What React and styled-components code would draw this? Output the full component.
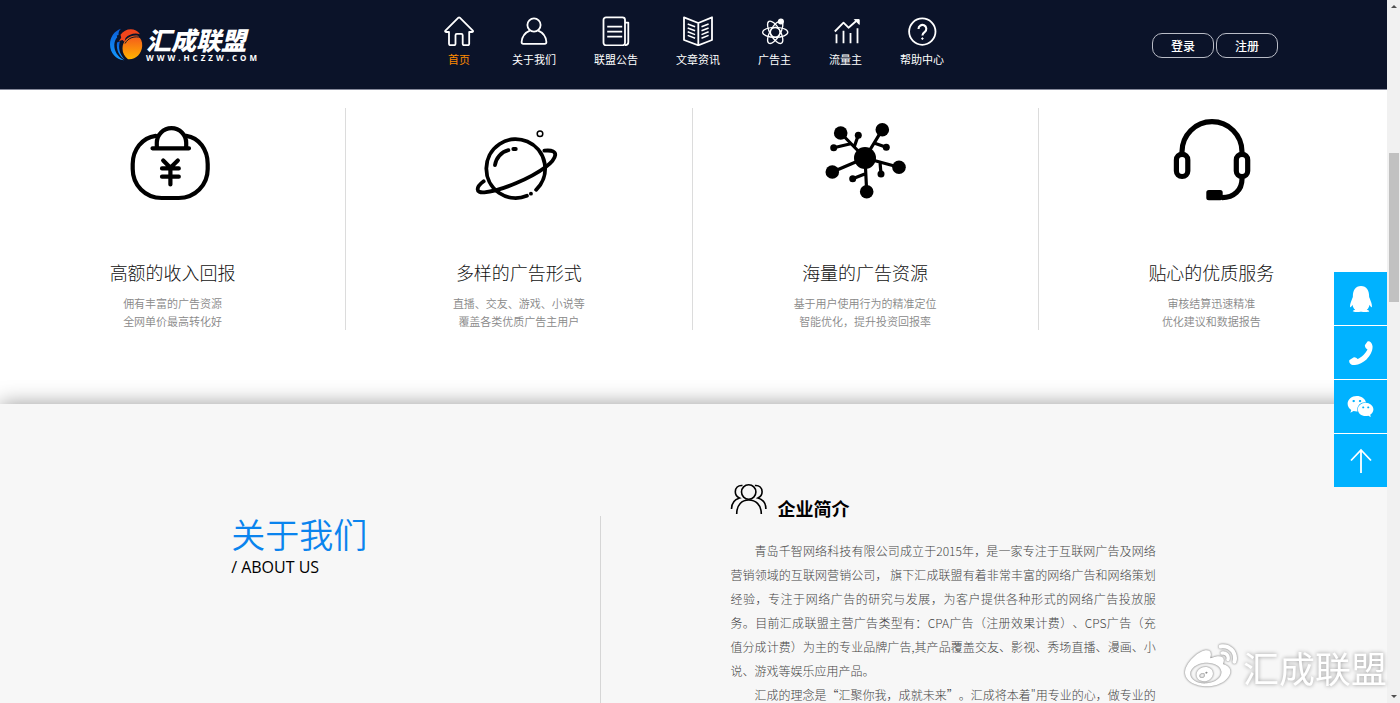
import React from "react"
import styled, { createGlobalStyle } from "styled-components"
import { FaQq, FaWeibo, FaWeixin } from "react-icons/fa"

const navItems = [
  { label: "首页", icon: "home", active: true },
  { label: "关于我们", icon: "user" },
  { label: "联盟公告", icon: "notice" },
  { label: "文章资讯", icon: "book" },
  { label: "广告主", icon: "atom" },
  { label: "流量主", icon: "chart" },
  { label: "帮助中心", icon: "help" },
]

const features = [
  { title: "高额的收入回报", icon: "bag", lines: ["佣有丰富的广告资源", "全网单价最高转化好"] },
  { title: "多样的广告形式", icon: "planet", lines: ["直播、交友、游戏、小说等", "覆盖各类优质广告主用户"] },
  { title: "海量的广告资源", icon: "network", lines: ["基于用户使用行为的精准定位", "智能优化，提升投资回报率"] },
  { title: "贴心的优质服务", icon: "headset", lines: ["审核结算迅速精准", "优化建议和数据报告"] },
]

const navIcons = {
  home: (
    <path d="M14.4 1.7 1.4 14.6q-.8 1.2.7 1.4H5v11.7q0 1.5 1.5 1.5h3.6q1.4 0 1.4-1.4v-8.6q0-1.3 1.3-1.3h4.6q1.3 0 1.3 1.3v8.6q0 1.4 1.4 1.4h3.6q1.5 0 1.5-1.5V16h2.9q1.5-.2.7-1.4L15.8 1.7q-.7-.6-1.4 0Z" />
  ),
  user: (
    <>
      <circle cx="15" cy="9" r="6.6" />
      <path d="M10.8 14.6C6 16.6 3 21 2.6 26q0 1.8 1.7 1.8h21.4q1.7 0 1.7-1.8c-.4-5-3.4-9.4-8.2-11.4" />
    </>
  ),
  notice: (
    <>
      <rect x="2.5" y="1.3" width="21.5" height="28" rx="2.5" />
      <path d="M6.2 10.7h15M6.2 15.7h15M6.2 20.7h15M24 6.6h3.3v19.6q0 3-3.4 3" />
    </>
  ),
  book: (
    <>
      <path d="M1 1.3 15.3 7 29 1.3V24l-13.7 5.3L1 24ZM15.3 7v22" />
      <path d="m4.7 8 7.4 2.8M4.7 12l7.4 2.8M4.7 15.8l7.4 2.8M4.7 19.4l7.4 2.8M25.6 8l-7.1 2.8M25.6 12l-7.1 2.8M25.6 15.8l-7.1 2.8M25.6 19.4l-7.1 2.8" strokeWidth="1.5" />
    </>
  ),
  atom: (
    <g strokeWidth="1.3">
      <circle cx="15.2" cy="16.3" r="4.8" />
      <ellipse cx="15.2" cy="16.3" rx="12.6" ry="5" />
      <ellipse cx="15.2" cy="16.3" rx="12.6" ry="5" transform="rotate(60 15.2 16.3)" />
      <ellipse cx="15.2" cy="16.3" rx="12.6" ry="5" transform="rotate(120 15.2 16.3)" />
      <circle cx="20.9" cy="5.5" r="2.4" fill="currentColor" />
    </g>
  ),
  chart: (
    <>
      <path d="M5.5 18.3v9M12.5 14.7v12.6M19.5 17v10.3M26.5 12.3v15" />
      <path d="m3.8 15.5 8.7-8.8 5 5 8-7" />
      <path d="M23.4 3.6h4.8v4.8Z" fill="currentColor" strokeWidth="1" />
    </>
  ),
  help: (
    <>
      <circle cx="15.3" cy="15.6" r="13.2" />
      <path d="M11.5 12.9a3.9 3.9 0 1 1 6.3 3c-1.6 1.2-2.4 1.8-2.4 3.6" strokeWidth="2.1" />
      <circle cx="15.4" cy="22.6" r=".8" fill="currentColor" strokeWidth="1" />
    </>
  ),
}

const featureIcons = {
  bag: (
    <g strokeWidth="4.2">
      <path d="M32.7 27.8C19 29.5 9.7 42 9.7 56v5C9.7 77 22 90 38.7 90h17C72 90 84.7 77 84.7 61v-5c0-14-8.5-26.5-21.4-28.2" />
      <path d="M33.8 40V34.8a14.7 14.7 0 0 1 29.4 0V40M29.5 40.3h36.5" />
      <path d="m40.2 52.5 7.2 7.2 7.4-7.2M39 60.4h16.8M39 68.7h16.8M47.4 60v16.5" />
    </g>
  ),
  planet: (
    <g strokeWidth="3.8">
      <path d="M57.9 87.8A29.4 29.4 0 1 1 67.1 81.8M61.9 85.7h.1" />
      <path d="M14.7 73.3C7 79 6 85 15.4 84.3 32 83 62 70 77 58.7 87 51 92 41 75.4 42.7" />
      <path d="M26 57c1-7 6-13 13.4-14.8M44.3 41h2.5" />
      <circle cx="71" cy="25.7" r="2.8" strokeWidth="1.5" />
    </g>
  ),
  network: (
    <>
      <path strokeWidth="3.2" strokeLinecap="butt" d="M50 50 25.7 25M50 50l17.300-28.300M50 50 17.300 64M50 50l34 9.300M50 50l1.700 33.700M35.700 35.700l-17 4M39 39.500l4.300-12.200M59 35l12.300 4.300M65 54l1 12M51 65.500l-13.300 5.200" />
      <g fill="currentColor" stroke="none">
        <circle cx="50" cy="50" r="11" />
        <circle cx="25.7" cy="25" r="6.8" />
        <circle cx="67.3" cy="21.7" r="6.8" />
        <circle cx="17.3" cy="64" r="6.8" />
        <circle cx="84" cy="59.3" r="6.8" />
        <circle cx="51.7" cy="83.7" r="6.8" />
        <circle cx="43.3" cy="27.3" r="3.5" />
        <circle cx="18.7" cy="39.7" r="3.5" />
        <circle cx="71.3" cy="39.3" r="3.5" />
        <circle cx="66" cy="66" r="3.5" />
        <circle cx="37.7" cy="70.7" r="3.5" />
      </g>
    </>
  ),
  headset: (
    <g strokeWidth="5.2" strokeLinecap="butt">
      <path d="M21 46V43.7a30 30 0 0 1 60 0V46M81 69v2c0 11-8 18.7-20 18.7" />
      <rect x="15.4" y="46.3" width="11.4" height="22.2" rx="5.6" />
      <rect x="75.3" y="46.3" width="11.4" height="22.2" rx="5.6" />
      <rect x="45.3" y="82" width="16.4" height="10.2" rx="2.5" fill="currentColor" stroke="none" />
    </g>
  ),
}

const LogoMark = () => (
  <svg width="34" height="34" viewBox="0 0 34 34" aria-hidden="true">
    <defs>
      <linearGradient id="ball" x1="0" y1="0" x2="0" y2="1">
        <stop offset="0" stopColor="#f4571c" />
        <stop offset="1" stopColor="#ffb400" />
      </linearGradient>
      <linearGradient id="moon" x1="0" y1="0" x2="0" y2="1">
        <stop offset="0" stopColor="#0b5fd8" />
        <stop offset="1" stopColor="#159bff" />
      </linearGradient>
    </defs>
    <path fill="url(#moon)" d="M11 .8C4 3 0 9.5 0 16.5 0 25 6 31.5 14 32.3 7.5 28.5 4 23 4.3 16.5 4.5 13.5 5.5 11 7.2 9.2L6.8 7.5 8.5 7C8.3 4.5 9.2 2.5 11 .8Z" />
    <path fill="url(#moon)" d="M7 14.5 10 13.2C8 20 9.5 26 14.8 31.5 9.5 28.5 6 22 7 14.5Z" />
    <path fill="#f2451c" d="M10.5 6.8C15-.2 25.5-1 30 6.2 25 4.5 19 6 15.5 10L14.5 14 12.5 12 9 13 11.2 9.8Z" />
    <path fill="url(#ball)" d="M12.5 20.5C12.5 12.5 20 6.3 28 7.8 31 10.5 32.5 14 32.2 18 31.7 26 25.5 32 18 31.2 14.5 28.5 12.5 25 12.5 20.5Z" />
    <path fill="none" stroke="#0b1329" strokeWidth="1" d="M15 15.5C18.5 9.5 24.5 7.8 31 9.5" />
  </svg>
)

const PhoneIcon = () => (
  <svg width="24" height="24" viewBox="0 0 24 24" fill="currentColor" aria-hidden="true">
    <path d="M18.5.5C20-.5 23 1 23.5 5c.5 5-2.5 10-6 13.5-4 3.5-9.5 6-14 5.5C1 23.5-.5 20.5.5 19l4-2.5c1.500-.5 3 .5 4 1.500 3.500-1 8.500-6 10-9.500C17 7.500 15.500 5.500 16 4Z" />
  </svg>
)

const TopIcon = () => (
  <svg width="24" height="26" viewBox="0 0 24 26" fill="none" stroke="currentColor" strokeWidth="1.8" aria-hidden="true">
    <path d="M12 25V2M2 12.5 12 2l10 10.5" />
  </svg>
)

const TeamIcon = () => (
  <svg width="38" height="32" viewBox="0 0 38 32" fill="none" stroke="currentColor" strokeWidth="1.6" aria-hidden="true">
    <circle cx="18.7" cy="9" r="7.2" />
    <path d="M6.7 31C6.7 21.5 12 17 18.7 17s12.6 4.5 12.6 14" />
    <path d="M12.5 2.5C8 2 5.3 5 5.3 8.7c0 3 1.5 5 4.2 6.3C4.5 16.5 1.5 20.5 1.5 26M24.9 2.5c4.5-.5 7.2 2.5 7.2 6.2 0 3-1.5 5-4.2 6.3 5 1.5 8 5.5 8 11" />
  </svg>
)

const App = () => (
  <Window lang="zh-CN">
    <GlobalStyle />
    <Page>
      <Header>
        <Logo href="#top">
          <LogoMark />
          <LogoText>
            <LogoName>汇成联盟</LogoName>
            <LogoUrl>WWW.HCZZW.COM</LogoUrl>
          </LogoText>
        </Logo>
        <Nav>
          {navItems.map((item) => (
            <NavLink key={item.label} href="#top" $active={item.active}>
              <NavIcon viewBox="0 0 30 30" aria-hidden="true">{navIcons[item.icon]}</NavIcon>
              {item.label}
            </NavLink>
          ))}
        </Nav>
        <Account>
          <AccountBtn type="button">登录</AccountBtn>
          <AccountBtn type="button">注册</AccountBtn>
        </Account>
      </Header>

      <Features>
        {features.map((feature) => (
          <Feature key={feature.title}>
            <FeatureIcon viewBox="0 0 100 100" aria-hidden="true">{featureIcons[feature.icon]}</FeatureIcon>
            <FeatureTitle>{feature.title}</FeatureTitle>
            {feature.lines.map((line) => (
              <FeatureLine key={line}>{line}</FeatureLine>
            ))}
          </Feature>
        ))}
      </Features>

      <About>
        <AboutContainer>
          <AboutHeading>
            <AboutTitle>关于我们</AboutTitle>
            <AboutSub>/ ABOUT US</AboutSub>
          </AboutHeading>
          <Profile>
            <ProfileHead>
              <TeamIcon />
              <ProfileTitle>企业简介</ProfileTitle>
            </ProfileHead>
            <ProfileText>
              青岛千智网络科技有限公司成立于2015年，是一家专注于互联网广告及网络营销领域的互联网营销公司， 旗下汇成联盟有着非常丰富的网络广告和网络策划经验，专注于网络广告的研究与发展，为客户提供各种形式的网络广告投放服务。目前汇成联盟主营广告类型有：CPA广告（注册效果计费）、CPS广告（充值分成计费）为主的专业品牌广告,其产品覆盖交友、影视、秀场直播、漫画、小说、游戏等娱乐应用产品。
            </ProfileText>
            <ProfileText>
              汇成的理念是“汇聚你我，成就未来”。汇成将本着"用专业的心，做专业的事"的经营理念。
            </ProfileText>
          </Profile>
        </AboutContainer>
      </About>
    </Page>

    <Scrollbar aria-hidden="true">
      <ScrollArrow />
      <ScrollTrack>
        <ScrollThumb />
      </ScrollTrack>
      <ScrollArrow $down />
    </Scrollbar>

    <SideTools>
      <SideBtn type="button" aria-label="QQ"><FaQq size={26} /></SideBtn>
      <SideBtn type="button" aria-label="电话"><PhoneIcon /></SideBtn>
      <SideBtn type="button" aria-label="微信"><FaWeixin size={27} /></SideBtn>
      <SideBtn type="button" aria-label="返回顶部"><TopIcon /></SideBtn>
    </SideTools>

    <Watermark>
      <FaWeibo size={52} />
      汇成联盟
    </Watermark>
  </Window>
)

export default App

const GlobalStyle = createGlobalStyle`
  *, *::before, *::after {
    box-sizing: border-box;
  }

  body {
    margin: 0;
    background: #fff;
    color: #000;
    font-family: "Noto Sans CJK SC", "Open Sans", sans-serif;
    text-spacing-trim: space-all;
  }

  h2, h3, p {
    margin: 0;
  }

  svg {
    display: block;
    flex-shrink: 0;
  }
`

const Window = styled.div`
  display: flex;
  height: 100vh;
  overflow: hidden;
`

const Page = styled.main`
  flex: 1;
  min-width: 0;
  overflow: hidden;
`

const Header = styled.header`
  display: flex;
  align-items: center;
  height: 90px;
  padding: 0 109px 0 110px;
  background: #0b1329;
  border-bottom: 1px solid #85899a;
`

const Logo = styled.a`
  display: flex;
  align-items: center;
  flex: 0 0 334px;
  color: #fff;
  text-decoration: none;
`

const LogoText = styled.span`
  display: flex;
  flex-direction: column;
  padding-left: 2px;
`

const LogoName = styled.span`
  font-size: 25px;
  font-style: italic;
  font-weight: 900;
  line-height: 24px;
`

const LogoUrl = styled.span`
  padding-top: 2px;
  font-family: "Open Sans", sans-serif;
  font-size: 8px;
  font-weight: 700;
  letter-spacing: 3px;
  line-height: 10px;
`

const Nav = styled.nav`
  display: flex;
  align-self: flex-start;
  gap: 38px;
  padding-top: 16px;
`

const NavLink = styled.a`
  display: flex;
  flex-direction: column;
  align-items: center;
  gap: 5px;
  color: ${(props) => (props.$active ? "#ff8a00" : "#fff")};
  font-size: 11px;
  line-height: 16px;
  text-decoration: none;
  white-space: nowrap;
`

const NavIcon = styled.svg`
  width: 30px;
  height: 30px;
  color: #fff;
  fill: none;
  stroke: currentColor;
  stroke-width: 1.8;
  stroke-linejoin: round;
`

const Account = styled.div`
  display: flex;
  gap: 2px;
  margin-left: auto;
  padding-top: 2px;
`

const AccountBtn = styled.button`
  width: 62px;
  height: 25px;
  padding: 0;
  border: 1px solid #b9bcc6;
  border-radius: 10px;
  background: transparent;
  color: #fff;
  font-family: inherit;
  font-size: 12px;
  font-weight: 500;
  line-height: 20px;
`

const Features = styled.section`
  display: grid;
  grid-template-columns: repeat(4, 1fr);
  padding: 18px 2px 74px 0;
`

const Feature = styled.article`
  display: flex;
  flex-direction: column;
  align-items: center;
  border-right: 1px solid #dcdcdc;

  &:last-child {
    border-color: transparent;
  }
`

const FeatureIcon = styled.svg`
  width: 100px;
  height: 100px;
  margin-bottom: 50px;
  fill: none;
  stroke: currentColor;
  stroke-linecap: round;
  stroke-linejoin: round;
`

const FeatureTitle = styled.h3`
  margin-bottom: 8px;
  color: #111;
  font-size: 18px;
  font-weight: 300;
  line-height: 28px;
`

const FeatureLine = styled.p`
  color: #888;
  font-size: 11px;
  font-weight: 350;
  line-height: 18px;
`

const About = styled.section`
  background: #f7f7f7;
  box-shadow: 0 0 20px rgba(0, 0, 0, 0.4);
`

const AboutContainer = styled.div`
  display: flex;
  justify-content: space-between;
  width: 66.67%;
  margin: 0 auto;
`

const AboutHeading = styled.div`
  width: 40%;
  margin-top: 112px;
  border-right: 1px solid #d6d6d6;
`

const AboutTitle = styled.h2`
  color: #0a84ee;
  font-size: 34px;
  font-weight: 350;
  line-height: 36px;
`

const AboutSub = styled.p`
  padding-top: 4px;
  font-family: "Open Sans", sans-serif;
  font-size: 16px;
  line-height: 22px;
`

const Profile = styled.div`
  width: 46%;
  padding: 79px 0 60px;
`

const ProfileHead = styled.div`
  display: flex;
  align-items: flex-start;
  gap: 9px;
  margin-bottom: 18px;
`

const ProfileTitle = styled.h3`
  padding-top: 12px;
  font-size: 18px;
  font-weight: 700;
  line-height: 26px;
`

const ProfileText = styled.p`
  color: #444;
  font-size: 12px;
  font-weight: 300;
  line-height: 24px;
  text-align: justify;
  text-indent: 2em;
`

const Scrollbar = styled.div`
  display: flex;
  flex-direction: column;
  align-items: center;
  justify-content: space-between;
  width: 13px;
  padding: 5px 0;
  background: #f1f1f1;
`

const ScrollArrow = styled.span`
  border: 3px solid transparent;
  border-top: ${(props) => (props.$down ? "3px solid #505050" : "0")};
  border-bottom: ${(props) => (props.$down ? "0" : "3px solid #505050")};
`

const ScrollTrack = styled.div`
  flex: 1;
  padding-top: 145px;
`

const ScrollThumb = styled.div`
  width: 10px;
  height: 149px;
  background: #c1c1c1;
`

const SideTools = styled.aside`
  position: fixed;
  top: 272px;
  right: 13px;
  display: grid;
  gap: 1px;
  background: #fff;
`

const SideBtn = styled.button`
  display: flex;
  align-items: center;
  justify-content: center;
  width: 53px;
  height: 53px;
  padding: 0;
  border: 0;
  background: #00b2ff;
  color: #fff;
`

const Watermark = styled.div`
  position: fixed;
  right: 13px;
  bottom: 10px;
  display: flex;
  align-items: center;
  gap: 6px;
  color: #fff;
  font-size: 36px;
  font-weight: 400;
  line-height: 52px;
  text-shadow: 0 0 4px rgba(0, 0, 0, 0.4);
  pointer-events: none;

  svg {
    filter: drop-shadow(0 0 1px rgba(0, 0, 0, 0.6));
  }
`
